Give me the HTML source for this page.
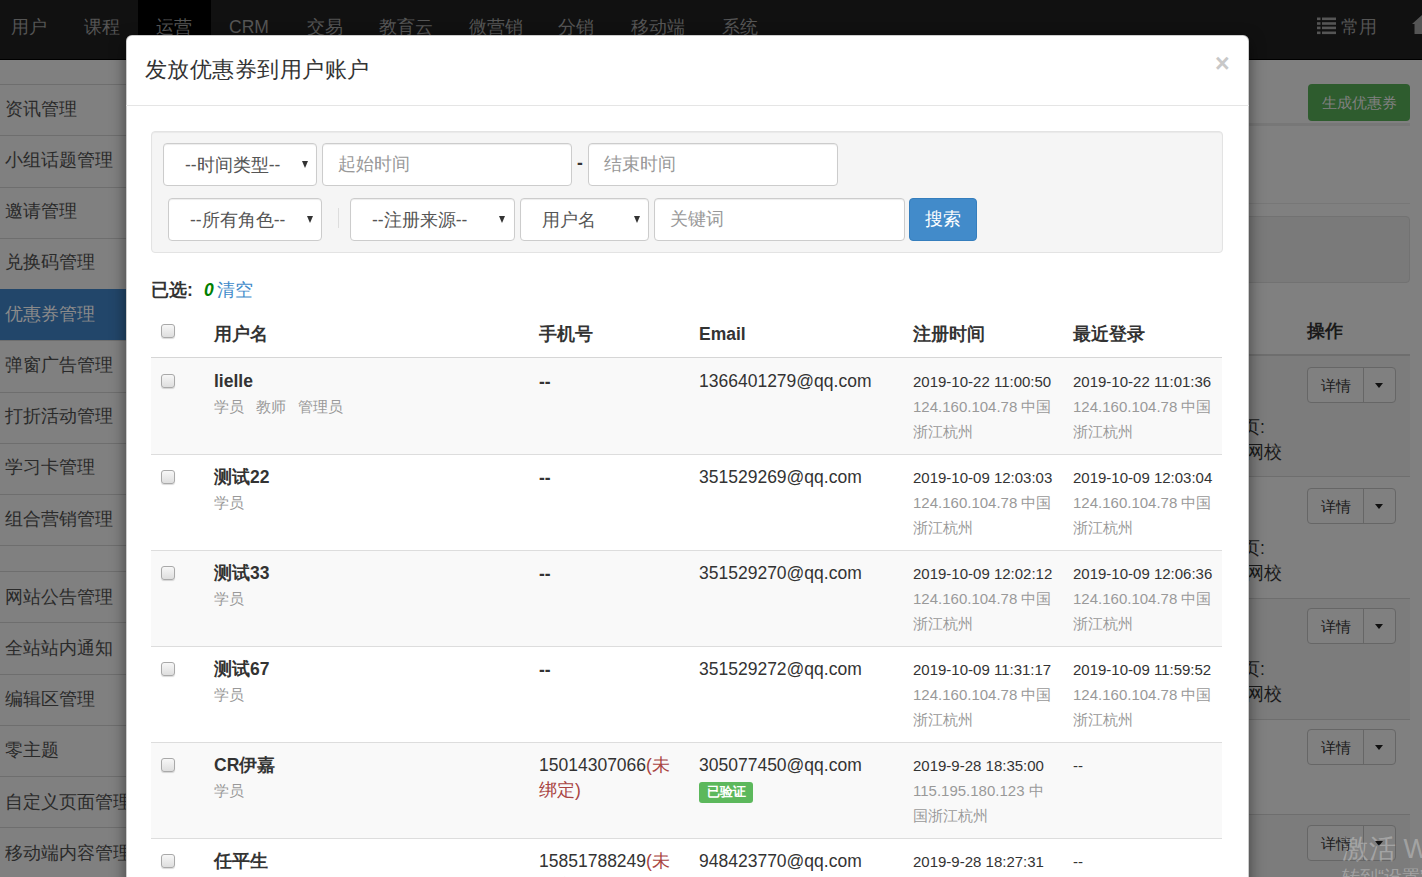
<!DOCTYPE html><html><head><meta charset="utf-8"><style>
*{box-sizing:border-box;margin:0;padding:0}
html,body{width:1422px;height:877px;overflow:hidden}
body{position:relative;background:#808080;font-family:"Liberation Sans",sans-serif;color:#333}
.a{position:absolute;white-space:nowrap}
#nav{position:absolute;left:0;top:0;width:1422px;height:60px;background:#111;border-bottom:1px solid #000}
#nav .act{position:absolute;left:138px;top:0;width:73px;height:59px;background:#000}
#nav .it{position:absolute;top:15px;font-size:17.5px;line-height:25px;color:#555;white-space:nowrap}
.li{position:absolute;left:0;width:140px;border-top:1px solid #6e6e6e}
.stx{position:absolute;left:5px;font-size:18px;line-height:25px;color:#2a2a2a;white-space:nowrap}
.bgb{position:absolute;left:1307px;width:89px;height:36px;border:1px solid #666;border-radius:4px;background:#808080}
.bgb .sp{position:absolute;left:55px;top:0;width:1px;height:34px;background:#666}
.bgb .t{position:absolute;left:13px;top:5px;font-size:15px;line-height:25px;color:#1a1a1a}
.bgb .cr{position:absolute;left:67px;top:15px;border-left:4.5px solid transparent;border-right:4.5px solid transparent;border-top:5px solid #111}
.bgt{position:absolute;font-size:17.5px;line-height:25px;color:#1a1a1a;white-space:nowrap}
#modal{position:absolute;left:126px;top:35px;width:1123px;height:900px;background:#fff;border:1px solid rgba(0,0,0,.2);border-radius:6px;box-shadow:0 5px 15px rgba(0,0,0,.5)}
.ctl{position:absolute;height:43px;background:#fff;border:1px solid #ccc;border-radius:4px;font-size:17.5px;line-height:25px;box-shadow:inset 0 1px 1px rgba(0,0,0,.075)}
.ctl .t{position:absolute;top:8px;white-space:nowrap;color:#555}
.ctl .ph{color:#999}
.arr{position:absolute;top:17px;width:0;height:0;border-left:3.5px solid transparent;border-right:3.5px solid transparent;border-top:7px solid #333}
.row{position:absolute;left:151px;width:1071px;height:96px;border-top:1px solid #ddd}
.row.s{background:#f9f9f9}
.cb{position:absolute;left:10px;width:14px;height:14px;border:1px solid #a9a9a9;border-radius:3px;background:linear-gradient(#f7f7f7,#dedede);box-shadow:0 1px 1px rgba(0,0,0,.15)}
.c{position:absolute;top:10px;line-height:25px;white-space:nowrap}
.nm{font-size:17.5px;font-weight:bold;color:#333}
.rl{font-size:15px;color:#999}
.rl span{margin-right:12px}
.d{font-size:15px;color:#333}
.g{color:#999}
.t17{font-size:17.5px;color:#333}
.red{color:#a94442}
.lbl{display:inline-block;background:#5cb85c;color:#fff;font-size:13px;font-weight:bold;line-height:20px;height:21px;padding:0 7.5px;border-radius:3px;margin-top:2px}
.th{position:absolute;top:322px;font-size:17.5px;font-weight:bold;line-height:25px;color:#333;white-space:nowrap}
</style></head><body>
<div id="nav"><div class="act"></div>
<div class="it" style="left:11px">用户</div>
<div class="it" style="left:84px">课程</div>
<div class="it" style="left:156px">运营</div>
<div class="it" style="left:229px">CRM</div>
<div class="it" style="left:307px">交易</div>
<div class="it" style="left:379px">教育云</div>
<div class="it" style="left:469px">微营销</div>
<div class="it" style="left:558px">分销</div>
<div class="it" style="left:631px">移动端</div>
<div class="it" style="left:722px">系统</div>
<div class="it" style="left:1341px">常用</div>
<div class="a" style="left:1317px;top:17px"><svg width="19" height="18" viewBox="0 0 19 18"><g fill="#555"><rect x="0" y="0.5" width="3.5" height="2.6"/><rect x="5" y="0.5" width="14" height="2.6"/><rect x="0" y="5.2" width="3.5" height="2.6"/><rect x="5" y="5.2" width="14" height="2.6"/><rect x="0" y="9.6" width="3.5" height="2.6"/><rect x="5" y="9.6" width="14" height="2.6"/><rect x="0" y="14.5" width="3.5" height="2.6"/><rect x="5" y="14.5" width="14" height="2.6"/></g></svg></div>
<div class="a" style="left:1412px;top:15px"><svg width="12" height="20" viewBox="0 0 12 20"><path d="M10 0 L0 9 L2.5 9 L2.5 19 L12 19 L12 1 Z" fill="#555"/></svg></div>
</div>
<div class="li" style="top:84.00px;height:51.25px"></div>
<div class="stx" style="top:96.50px">资讯管理</div>
<div class="li" style="top:135.25px;height:51.25px"></div>
<div class="stx" style="top:147.75px">小组话题管理</div>
<div class="li" style="top:186.50px;height:51.25px"></div>
<div class="stx" style="top:199.00px">邀请管理</div>
<div class="li" style="top:237.75px;height:51.25px"></div>
<div class="stx" style="top:250.25px">兑换码管理</div>
<div class="li" style="top:289.00px;height:51.75px;background:#22466a;border-top-color:#22466a"></div>
<div class="stx" style="top:301.50px;color:#8a8a8a">优惠券管理</div>
<div class="li" style="top:340.25px;height:51.25px"></div>
<div class="stx" style="top:352.75px">弹窗广告管理</div>
<div class="li" style="top:391.50px;height:51.25px"></div>
<div class="stx" style="top:404.00px">打折活动管理</div>
<div class="li" style="top:442.75px;height:51.25px"></div>
<div class="stx" style="top:455.25px">学习卡管理</div>
<div class="li" style="top:494.00px;height:51.25px"></div>
<div class="stx" style="top:506.50px">组合营销管理</div>
<div class="li" style="top:545.25px;height:26px"></div>
<div class="li" style="top:571.05px;height:51.25px"></div>
<div class="stx" style="top:584.55px">网站公告管理</div>
<div class="li" style="top:622.30px;height:51.25px"></div>
<div class="stx" style="top:635.80px">全站站内通知</div>
<div class="li" style="top:673.55px;height:51.25px"></div>
<div class="stx" style="top:687.05px">编辑区管理</div>
<div class="li" style="top:724.80px;height:51.25px"></div>
<div class="stx" style="top:738.30px">零主题</div>
<div class="li" style="top:776.05px;height:51.25px"></div>
<div class="stx" style="top:789.55px">自定义页面管理</div>
<div class="li" style="top:827.30px;height:51.25px"></div>
<div class="stx" style="top:840.80px">移动端内容管理</div>
<div class="a" style="left:1308px;top:84px;width:102px;height:37px;background:#2e5c2e;border-radius:4px"></div>
<div class="a" style="left:1322px;top:90px;font-size:15px;line-height:25px;color:#808080">生成优惠券</div>
<div class="a" style="left:1150px;top:123px;width:260px;height:3px;background:#777"></div>
<div class="a" style="left:1150px;top:203px;width:260px;height:1px;background:#777"></div>
<div class="a" style="left:1150px;top:216px;width:260px;height:67px;background:#7a7a7a;border:1px solid #727272;border-radius:4px"></div>
<div class="a" style="left:1307px;top:319px;font-size:17.5px;line-height:25px;font-weight:bold;color:#1a1a1a">操作</div>
<div class="a" style="left:1150px;top:354px;width:260px;height:2px;background:#6e6e6e"></div>
<div class="a" style="left:1150px;top:356px;width:260px;height:120px;background:#7c7c7c"></div>
<div class="a" style="left:1150px;top:599px;width:260px;height:120px;background:#7c7c7c"></div>
<div class="a" style="left:1150px;top:815px;width:260px;height:62px;background:#7c7c7c"></div>
<div class="a" style="left:1150px;top:476px;width:260px;height:1px;background:#6e6e6e"></div>
<div class="a" style="left:1150px;top:598px;width:260px;height:1px;background:#6e6e6e"></div>
<div class="a" style="left:1150px;top:719px;width:260px;height:1px;background:#6e6e6e"></div>
<div class="a" style="left:1150px;top:814px;width:260px;height:1px;background:#6e6e6e"></div>
<div class="bgb" style="top:367px"><div class="sp"></div><div class="t">详情</div><div class="cr"></div></div>
<div class="bgb" style="top:488px"><div class="sp"></div><div class="t">详情</div><div class="cr"></div></div>
<div class="bgb" style="top:608px"><div class="sp"></div><div class="t">详情</div><div class="cr"></div></div>
<div class="bgb" style="top:729px"><div class="sp"></div><div class="t">详情</div><div class="cr"></div></div>
<div class="bgb" style="top:825px"><div class="sp"></div><div class="t">详情</div><div class="cr"></div></div>
<div class="bgt" style="left:1224px;top:415px">首页:</div>
<div class="bgt" style="left:1245.5px;top:440px">网校</div>
<div class="bgt" style="left:1224px;top:536px">首页:</div>
<div class="bgt" style="left:1245.5px;top:561px">网校</div>
<div class="bgt" style="left:1224px;top:657px">首页:</div>
<div class="bgt" style="left:1245.5px;top:682px">网校</div>
<div class="a" style="left:1342px;top:831px;font-size:27px;line-height:36px;color:rgba(255,255,255,.3)">激活 Windows</div>
<div class="a" style="left:1342px;top:866px;font-size:18px;line-height:22px;color:rgba(255,255,255,.3)">转到“设置”以激活 Windows。</div>
<div id="modal"></div>
<div class="a" style="left:126px;top:105px;width:1123px;height:1px;background:#e5e5e5"></div>
<div class="a" style="left:145px;top:53.5px;font-size:22px;letter-spacing:0.45px;line-height:32px;color:#333">发放优惠券到用户账户</div>
<div class="a" style="left:1215px;top:46.5px;font-size:25px;line-height:32px;font-weight:bold;color:#c8c8c8">×</div>
<div class="a" style="left:151px;top:131px;width:1072px;height:122px;background:#f5f5f5;border:1px solid #e3e3e3;border-radius:4px;box-shadow:inset 0 1px 1px rgba(0,0,0,.05)"></div>
<div class="ctl" style="left:163px;top:143px;width:154px"><div class="t" style="left:21px;top:9px">--时间类型--</div><div class="arr" style="left:138px"></div></div>
<div class="ctl" style="left:322px;top:143px;width:250px"><div class="t ph" style="left:15px">起始时间</div></div>
<div class="a" style="left:577px;top:151px;font-size:17.5px;line-height:25px;font-weight:bold;color:#333">-</div>
<div class="ctl" style="left:588px;top:143px;width:250px"><div class="t ph" style="left:15px">结束时间</div></div>
<div class="ctl" style="left:168px;top:198px;width:154px"><div class="t" style="left:21px;top:9px">--所有角色--</div><div class="arr" style="left:138px"></div></div>
<div class="a" style="left:338px;top:208px;width:1px;height:20px;background:#ddd"></div>
<div class="ctl" style="left:350px;top:198px;width:165px"><div class="t" style="left:21px;top:9px">--注册来源--</div><div class="arr" style="left:148px"></div></div>
<div class="ctl" style="left:520px;top:198px;width:129px"><div class="t" style="left:21px;top:9px">用户名</div><div class="arr" style="left:113px"></div></div>
<div class="ctl" style="left:654px;top:198px;width:251px"><div class="t ph" style="left:15px">关键词</div></div>
<div class="a" style="left:909px;top:198px;width:68px;height:43px;background:#428bca;border:1px solid #357ebd;border-radius:4px"></div>
<div class="a" style="left:925px;top:207px;font-size:17.5px;line-height:25px;color:#fff">搜索</div>
<div class="a" style="left:151px;top:278px;font-size:17.5px;line-height:25px;color:#333"><b>已选:</b></div>
<div class="a" style="left:204px;top:278px;font-size:17.5px;line-height:25px;color:green;font-weight:bold;font-style:italic">0</div>
<div class="a" style="left:217px;top:278px;font-size:17.5px;line-height:25px;color:#428bca">清空</div>
<div class="cb" style="left:161px;top:324px"></div>
<div class="th" style="left:214px">用户名</div>
<div class="th" style="left:539px">手机号</div>
<div class="th" style="left:699px">Email</div>
<div class="th" style="left:913px">注册时间</div>
<div class="th" style="left:1073px">最近登录</div>
<div class="a" style="left:151px;top:357px;width:1071px;height:2px;background:#d6d6d6"></div>
<div class="row s" style="top:358px;border-top-color:transparent;">
<div class="cb" style="top:15px"></div>
<div class="c" style="left:63px"><div class="nm">lielle</div><div class="rl"><span>学员</span><span>教师</span><span>管理员</span></div></div>
<div class="c t17" style="left:388px;top:11px;font-weight:bold">--</div>
<div class="c t17" style="left:548px">1366401279@qq.com</div>
<div class="c d" style="left:762px">2019-10-22 11:00:50<br><span class="g">124.160.104.78 中国</span><br><span class="g">浙江杭州</span></div>
<div class="c d" style="left:922px">2019-10-22 11:01:36<br><span class="g">124.160.104.78 中国</span><br><span class="g">浙江杭州</span></div>
</div>
<div class="row" style="top:454px;">
<div class="cb" style="top:15px"></div>
<div class="c" style="left:63px"><div class="nm">测试22</div><div class="rl"><span>学员</span></div></div>
<div class="c t17" style="left:388px;top:11px;font-weight:bold">--</div>
<div class="c t17" style="left:548px">351529269@qq.com</div>
<div class="c d" style="left:762px">2019-10-09 12:03:03<br><span class="g">124.160.104.78 中国</span><br><span class="g">浙江杭州</span></div>
<div class="c d" style="left:922px">2019-10-09 12:03:04<br><span class="g">124.160.104.78 中国</span><br><span class="g">浙江杭州</span></div>
</div>
<div class="row s" style="top:550px;">
<div class="cb" style="top:15px"></div>
<div class="c" style="left:63px"><div class="nm">测试33</div><div class="rl"><span>学员</span></div></div>
<div class="c t17" style="left:388px;top:11px;font-weight:bold">--</div>
<div class="c t17" style="left:548px">351529270@qq.com</div>
<div class="c d" style="left:762px">2019-10-09 12:02:12<br><span class="g">124.160.104.78 中国</span><br><span class="g">浙江杭州</span></div>
<div class="c d" style="left:922px">2019-10-09 12:06:36<br><span class="g">124.160.104.78 中国</span><br><span class="g">浙江杭州</span></div>
</div>
<div class="row" style="top:646px;">
<div class="cb" style="top:15px"></div>
<div class="c" style="left:63px"><div class="nm">测试67</div><div class="rl"><span>学员</span></div></div>
<div class="c t17" style="left:388px;top:11px;font-weight:bold">--</div>
<div class="c t17" style="left:548px">351529272@qq.com</div>
<div class="c d" style="left:762px">2019-10-09 11:31:17<br><span class="g">124.160.104.78 中国</span><br><span class="g">浙江杭州</span></div>
<div class="c d" style="left:922px">2019-10-09 11:59:52<br><span class="g">124.160.104.78 中国</span><br><span class="g">浙江杭州</span></div>
</div>
<div class="row s" style="top:742px;">
<div class="cb" style="top:15px"></div>
<div class="c" style="left:63px"><div class="nm">CR伊嘉</div><div class="rl"><span>学员</span></div></div>
<div class="c t17" style="left:388px">15014307066<span class="red">(未</span><br><span class="red">绑定)</span></div>
<div class="c t17" style="left:548px">305077450@qq.com<br><span class="lbl">已验证</span></div>
<div class="c d" style="left:762px">2019-9-28 18:35:00<br><span class="g">115.195.180.123 中</span><br><span class="g">国浙江杭州</span></div>
<div class="c d" style="left:922px">--</div>
</div>
<div class="row" style="top:838px;">
<div class="cb" style="top:15px"></div>
<div class="c" style="left:63px"><div class="nm">任平生</div><div class="rl"></div></div>
<div class="c t17" style="left:388px">15851788249<span class="red">(未</span><br><span class="red">绑定)</span></div>
<div class="c t17" style="left:548px">948423770@qq.com</div>
<div class="c d" style="left:762px">2019-9-28 18:27:31<br><span class="g"></span><br><span class="g"></span></div>
<div class="c d" style="left:922px">--</div>
</div>
</body></html>
